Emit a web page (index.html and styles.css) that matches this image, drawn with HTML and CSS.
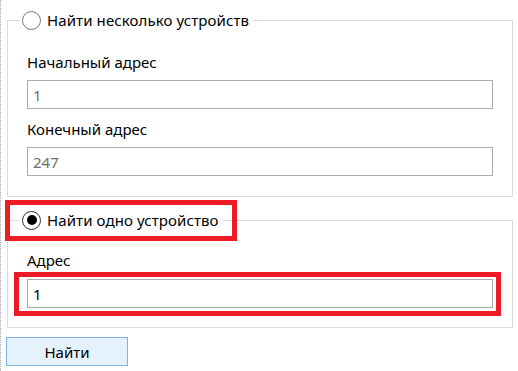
FILE: index.html
```html
<!DOCTYPE html>
<html lang="ru">
<head>
  <meta charset="UTF-8">
  <title>Поиск устройств</title>
  <link rel="stylesheet" href="styles.css">
</head>
<body>
  <div class="panel">
    <fieldset class="group">
      <legend><span class="radio"></span>Найти несколько устройств</legend>
      <label class="field-label">Начальный адрес</label>
      <input class="field muted" type="text" value="1">
      <label class="field-label next">Конечный адрес</label>
      <input class="field muted" type="text" value="247">
    </fieldset>

    <fieldset class="group second">
      <legend><span class="radio checked"></span>Найти одно устройство</legend>
      <label class="field-label">Адрес</label>
      <input class="field" type="text" value="1">
    </fieldset>

    <button class="find">Найти</button>

    <div class="mark mark-legend"></div>
    <div class="mark mark-input"></div>
  </div>
</body>
</html>
```

FILE: styles.css
```css
html, body { margin: 0; padding: 0; background: #fff; }
body { font-family: "Noto Sans", "Open Sans", sans-serif; font-size: 15px; color: #000; }

.panel { position: relative; height: 371px; box-sizing: border-box; border-left: 1px dotted #a8a8a8; padding-top: 10px; }

.group { margin: 0 0 0 6px; width: 506px; box-sizing: border-box; border: 1px solid #dcdcdc; padding: 22px 19px 20px 19px; }
.group.second { margin-top: 13px; padding-top: 20px; padding-bottom: 19px; }
.group legend { margin-left: -7px; padding: 0 4px 0 2px; line-height: 20px; height: 20px; display: flex; align-items: center; gap: 6px; letter-spacing: 0.1px; }

.radio { width: 19px; height: 19px; box-sizing: border-box; border: 1px solid #7a7a7a; border-radius: 50%; display: inline-flex; align-items: center; justify-content: center; background: #fff; }
.radio.checked { border-color: #333; }
.radio.checked::after { content: ""; width: 10px; height: 10px; border-radius: 50%; background: #000; }

.field-label { display: block; line-height: 20px; margin-bottom: 8px; }
.group.second .field-label { margin-bottom: 9px; }
.field-label.next { margin-top: 10px; }

.field { display: block; width: 100%; height: 29px; box-sizing: border-box; border: 1px solid #abadb3; padding: 0 5px; font: inherit; color: #000; outline: none; }
.field.muted { color: #6d6d6d; }

.find { display: block; margin: 9px 0 0 5px; width: 122px; height: 29px; border: 1px solid #7eb4ea; background: #e5f1fb; font: inherit; color: #000; padding: 0; }

.mark { position: absolute; border: 5px solid #ed1c24; box-sizing: border-box; pointer-events: none; }
.mark-legend { left: 4px; top: 200px; width: 232px; height: 41px; }
.mark-input { left: 13px; top: 272px; width: 487px; height: 44px; }
```
